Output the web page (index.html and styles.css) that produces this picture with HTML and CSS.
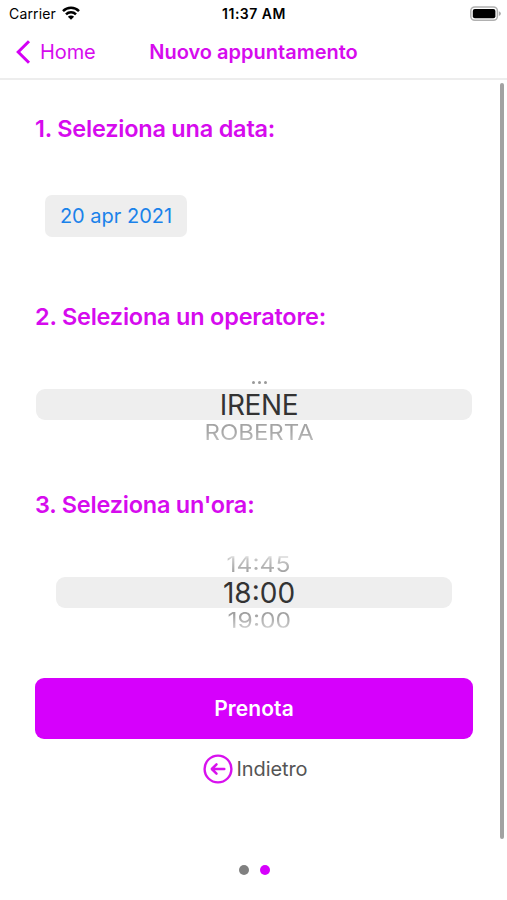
FILE: index.html
```html
<!DOCTYPE html>
<html lang="it">
<head>
<meta charset="utf-8">
<title>Nuovo appuntamento</title>
<link rel="stylesheet" href="styles.css">
</head>
<body>
<div class="screen">
  <div class="status">
    <div class="carrier"><span>Carrier</span>
      <svg class="wifi" width="18" height="14" viewBox="0 0 18 14"><g fill="none" stroke="#000" stroke-width="2.5"><path d="M1 5.1a11.3 11.3 0 0 1 16 0"/><path d="M4 8.3a7 7 0 0 1 10 0"/></g><path d="M9 13.8 5.9 10.7a4.4 4.4 0 0 1 6.2 0z"/></svg>
    </div>
    <span class="clock">11:37 AM</span>
    <svg class="battery" width="32" height="16" viewBox="0 0 32 16"><rect x=".8" y=".9" width="26.6" height="13.4" rx="4" fill="#fff" stroke="#b0b0b0" stroke-width="1.5"/><rect x="2.8" y="2.9" width="22.6" height="9.4" rx="2" fill="#000"/><path d="M28.9 5.2q2 .7 2 2.4t-2 2.4z" fill="#aaa"/></svg>
  </div>
  <header class="nav">
    <a class="back"><svg width="16" height="24" viewBox="0 0 16 24"><path d="M14 1.2 3.2 12 14 22.8" fill="none" stroke="#d400f5" stroke-width="3"/></svg><span>Home</span></a>
    <h1>Nuovo appuntamento</h1>
  </header>
  <main class="content">
    <section class="step">
      <h2>1. Seleziona una data:</h2>
      <div class="date">20 apr 2021</div>
    </section>
    <section class="step">
      <h2>2. Seleziona un operatore:</h2>
      <div class="wheel">
        <div class="side dots"><i></i><i></i><i></i></div>
        <div class="selected"><span class="name">IRENE</span></div>
        <div class="side after"><span class="roberta">ROBERTA</span></div>
      </div>
    </section>
    <section class="step last">
      <h2>3. Seleziona un'ora:</h2>
      <div class="wheel narrow">
        <div class="side before"><span class="hour">14:45</span></div>
        <div class="selected"><span class="time">18:00</span></div>
        <div class="side after"><span class="hour">19:00</span></div>
      </div>
    </section>
    <button class="book"><span>Prenota</span></button>
    <a class="return"><svg width="30" height="30" viewBox="0 0 30 30" fill="none" stroke="#d811ee"><circle cx="15" cy="15" r="13.4" stroke-width="2.4"/><path d="M21.3 15H9.2M13.5 10.4 8.8 15l4.7 4.6" stroke-width="2.5" stroke-linecap="round" stroke-linejoin="round"/></svg><span>Indietro</span></a>
    <div class="scrollbar"></div>
  </main>
  <footer class="pages"><i></i><i class="current"></i></footer>
</div>
</body>
</html>
```
FILE: styles.css
```css
* { box-sizing: border-box; }
body { margin: 0; background: #fff; font-family: Inter, "Liberation Sans", sans-serif; }
.screen { width: 507px; height: 900px; display: flex; flex-direction: column; overflow: hidden; }
.screen span, h1, h2 { white-space: nowrap; }
.status { height: 28px; display: grid; grid-template-columns: 1fr auto 1fr; align-items: center; padding: 0 5px 0 9px; font-size: 14px; }
.carrier { display: flex; align-items: center; gap: 6px; letter-spacing: .15px; margin-top: -2px; }
.clock { font-weight: 600; font-size: 14px; letter-spacing: .5px; margin: -2px 3px 0 0; }
.battery { justify-self: end; margin-top: -1px; }
.nav { height: 52px; display: grid; grid-template-columns: 1fr auto 1fr; align-items: center; padding: 0 15px 2px; border-bottom: 2px solid #ededed; color: #d60bee; }
.back { display: flex; align-items: center; gap: 9px; font-size: 20px; letter-spacing: -.1px; }
h1 { margin: 0; font-size: 20px; font-weight: 600; }
.content { position: relative; height: 760px; padding: 34px 34px 0 35px; display: flex; flex-direction: column; }
.step { height: 188px; flex: none; }
h2 { margin: 0; height: 29px; line-height: 29px; font-size: 23.5px; font-weight: 600; letter-spacing: -.22px; color: #d60bee; }
.date { width: 142px; height: 42px; margin: 52px 0 0 9.5px; border-radius: 7px; background: #eee; color: #1a82ea; font-size: 20px; line-height: 43px; text-align: center; padding-left: 1px; }
.wheel { margin: 29.5px 1px 0; height: 88px; text-align: center; }
.narrow { margin-left: 21px; margin-right: 21px; }
.selected { height: 31.5px; line-height: 32px; padding-left: 10px; border-radius: 9px; background: #eee; font-size: 28px; color: #333; }
.name { letter-spacing: -.4px; }
.side { height: 28px; line-height: 25px; padding-left: 10px; font-size: 22px; color: #aaa; }
.side span { display: inline-block; color: transparent; background: linear-gradient(#a0a0a0 25%, #c8c8c8 75%, #fff 92%); -webkit-background-clip: text; background-clip: text; }
.side .roberta { transform: scaleX(1.09); background-image: linear-gradient(#a4a4a4 40%, #c0c0c0 90%); }
.side .hour { transform: scale(1.12, .98); }
.before { line-height: 31px; }
.before .hour { background-image: linear-gradient(#fff 14%, #c8c8c8 32%, #a0a0a0 78%); }
.dots { display: flex; justify-content: center; align-items: flex-end; gap: 3px; padding-bottom: 5px; }
.dots i { width: 3px; height: 3px; border-radius: 50%; background: #999; }
.book { height: 61px; flex: none; border: 0; border-radius: 9px; background: #d600fc; color: #fff; font: 600 21px Inter, sans-serif; letter-spacing: .1px; }
.return { display: flex; align-items: center; justify-content: center; gap: 4px; height: 30px; margin-top: 15px; padding-left: 2px; color: #555; font-size: 20px; letter-spacing: -.1px; }
.scrollbar { position: absolute; right: 3px; top: 3px; width: 4px; height: 756px; border-radius: 2px; background: #a2a2a2; }
.pages { height: 60px; display: flex; justify-content: center; align-items: center; gap: 11px; padding-left: 1px; }
.pages i { width: 10px; height: 10px; border-radius: 50%; background: #808080; }
.pages .current { background: #d600fc; }
```
